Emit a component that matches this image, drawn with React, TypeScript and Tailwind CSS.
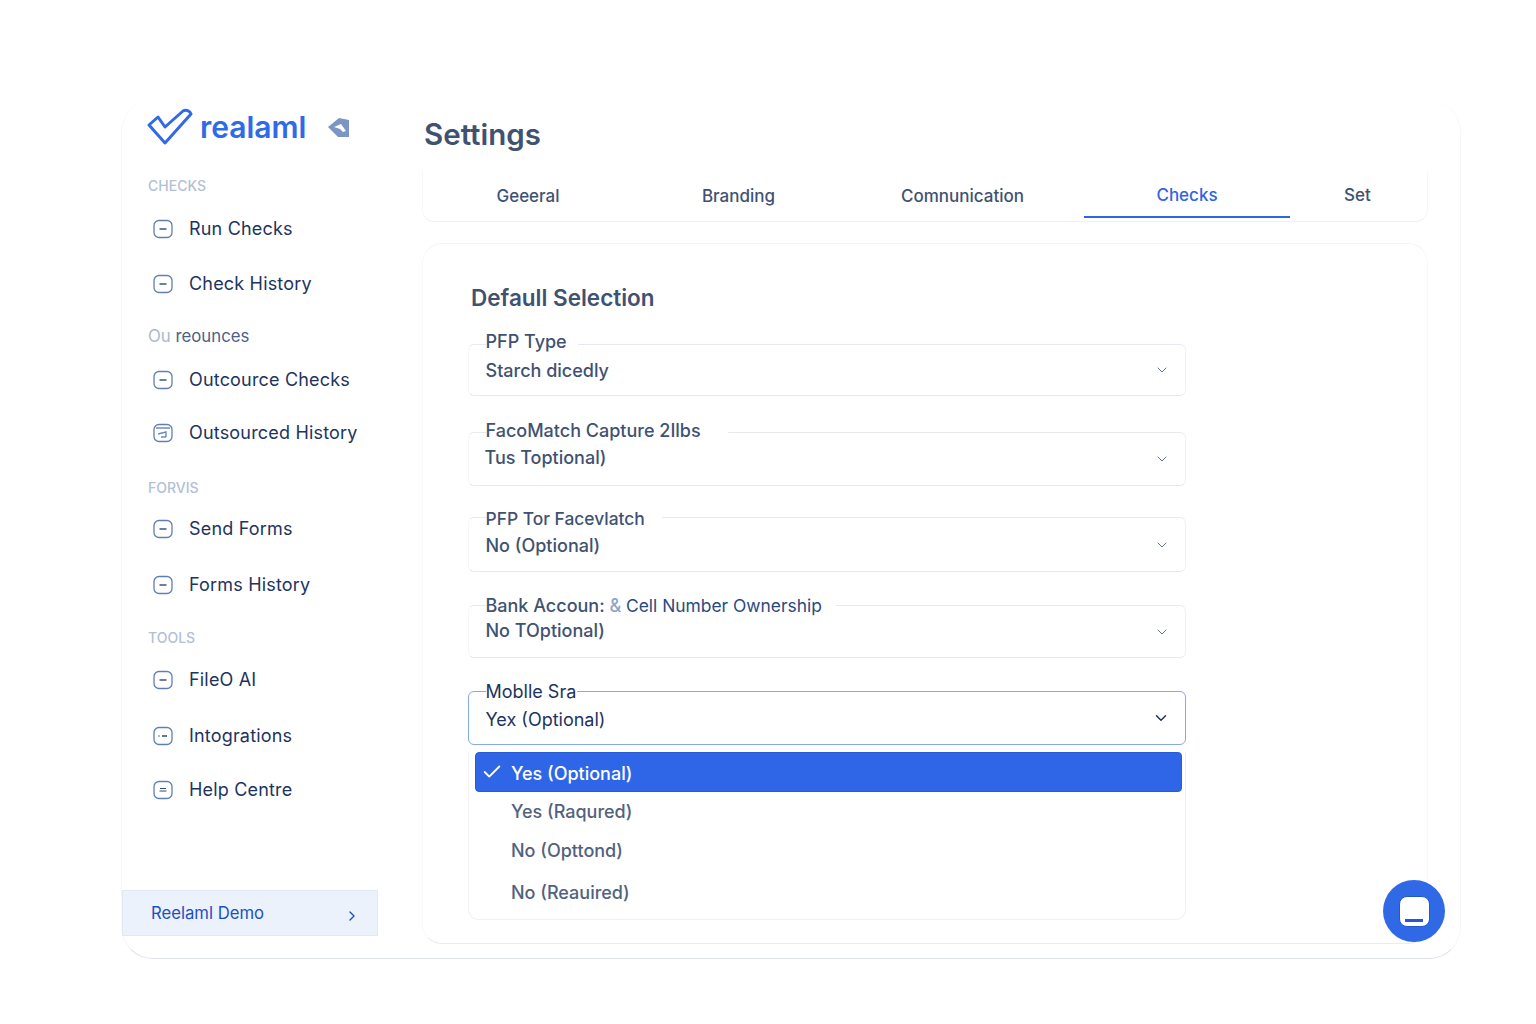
import React from 'react'
import { ChevronDown, ChevronRight, Check } from 'lucide-react'

const font = { fontFamily: 'Inter, "Noto Sans", sans-serif' }

// ── Sidebar ────────────────────────────────────────────────────────────────

const NavIcon: React.FC<{ kind?: 'minus' | 'cal' | 'dots' | 'lines' }> = ({ kind = 'minus' }) => (
  <svg width="20" height="20" viewBox="0 0 20 20" fill="none" className="shrink-0">
    <rect x="1" y="1.5" width="18" height="17" rx="5" stroke="#5f7fb3" strokeWidth="1.3" />
    {kind === 'minus' && <path d="M6.5 10h7" stroke="#2c4a7c" strokeWidth="1.4" />}
    {kind === 'cal' && <path d="M3 5h14M5 11l8-2v5M8 14h5" stroke="#6f8bb8" strokeWidth="1.4" />}
    {kind === 'dots' && <path d="M5.5 10h1M9 10h5" stroke="#2c4a7c" strokeWidth="1.6" />}
    {kind === 'lines' && <path d="M7 8.5h6M6.5 11h7" stroke="#2c4a7c" strokeWidth="1.1" />}
  </svg>
)

const NavItem: React.FC<{ label: string; kind?: 'minus' | 'cal' | 'dots' | 'lines'; className?: string }> = ({ label, kind, className }) => (
  <div className={`flex items-center gap-[16px] pl-[31px] text-[18px] tracking-[0.01em] leading-[24px] text-[#1d3461] ${className ?? ''}`}>
    <NavIcon kind={kind} />
    <span>{label}</span>
  </div>
)

const SectionLabel: React.FC<{ children: React.ReactNode; className?: string }> = ({ children, className }) => (
  <div className={`pl-[26px] text-[14px] leading-[18px] font-medium text-[#b3c0d6] ${className ?? ''}`}>{children}</div>
)

const Sidebar = () => (
  <aside className="w-[257px] shrink-0 flex flex-col">
    <div className="flex items-center pl-[25px] h-[54px]">
      <svg width="47" height="38" viewBox="0 0 47 38" fill="none">
        <path d="M2 17l9-8 7 10L36 3c3-2 7 0 8 3L18 35z" stroke="#2f6be6" strokeWidth="3" strokeLinejoin="round" />
      </svg>
      <span className="ml-[6px] text-[30px] leading-[36px] font-semibold text-[#2f6be6]">realaml</span>
      <svg width="22" height="20" viewBox="0 0 22 20" className="ml-[22px]">
        <path d="M0 10L11 1l10 2v17H10z" fill="#7c95c4" />
        <path d="M6 10l7-3 5 7-3 1-3-3z" fill="#ffffff" />
      </svg>
    </div>
    <SectionLabel className="mt-[23px]">CHECKS</SectionLabel>
    <NavItem label="Run Checks" className="mt-[22px]" />
    <NavItem label="Check History" className="mt-[31px]" />
    <div className="pl-[26px] mt-[28px] text-[16.8px] leading-[24px] text-[#4a6288]">
      <span className="text-[#a9b9d1]">Ou</span> reounces
    </div>
    <NavItem label="Outcource Checks" className="mt-[20px]" />
    <NavItem label="Outsourced History" kind="cal" className="mt-[29px]" />
    <SectionLabel className="mt-[34px]">FORVIS</SectionLabel>
    <NavItem label="Send Forms" className="mt-[20px]" />
    <NavItem label="Forms History" className="mt-[32px]" />
    <SectionLabel className="mt-[32px]">TOOLS</SectionLabel>
    <NavItem label="FileO AI" className="mt-[21px]" />
    <NavItem label="Intogrations" kind="dots" className="mt-[32px]" />
    <NavItem label="Help Centre" kind="lines" className="mt-[30px]" />
    <div className="mt-[88px] mr-[1px] h-[46px] flex items-center justify-between pl-[28px] pr-[17px] pt-[2px] bg-[#ecf2fc] border border-[#e0e8f5] text-[16.7px] text-[#1d4fc4]">
      <span>Reelaml Demo</span>
      <ChevronRight size={16} strokeWidth={2} className="mt-[3px]" />
    </div>
  </aside>
)

// ── Settings ───────────────────────────────────────────────────────────────

const tabs = [
  { label: 'Geeeral', w: 'w-[210px]', pt: 'pt-[5px]' },
  { label: 'Branding', w: 'w-[211px]', pt: 'pt-[5px]' },
  { label: 'Comnunication', w: 'w-[237px]', pt: 'pt-[5px]' },
  { label: 'Checks', w: 'w-[206px] ml-[3px]', pt: 'pt-[4px]', active: true },
  { label: 'Set', w: 'w-[135px]', pt: 'pt-[4px]' },
]

const Tabs = () => (
  <div className="flex h-[51px] w-[1006px] rounded-b-[12px] border-b border-x border-b-[#eef0f4] border-x-[#f6f7f9] text-[17px] text-[#3f5272] font-medium">
    {tabs.map(t => (
      <div
        key={t.label}
        className={`${t.w} ${t.pt} flex items-center justify-center ${t.active ? 'h-[47px] border-b-2 border-[#2f66e0] text-[#2f66e0]' : 'h-[46px]'}`}
      >
        {t.label}
      </div>
    ))}
  </div>
)

const Field: React.FC<{
  label: React.ReactNode
  value: string
  box: string
  labelPos: string
  valuePos: string
  focused?: boolean
}> = ({ label, value, box, labelPos, valuePos, focused }) => (
  <div className={`relative -ml-[3px] w-[718px] rounded-[6px] border ${focused ? 'border-[#86a9e8]' : 'border-[#e6e9ef] border-l-[#f6f7f9] border-r-[#f0f1f5] font-medium'} ${box}`}>
    <div className={`absolute left-[16.5px] right-0 flex items-center text-[18px] leading-[24px] ${labelPos} ${focused ? 'text-[#1d3461]' : 'text-[#3f5272]'}`}>
      {label}
    </div>
    <div className={`absolute left-[16.5px] text-[18px] leading-[24px] ${valuePos} ${focused ? 'text-[#1d3461]' : 'text-[#3f5272]'}`}>{value}</div>
    <ChevronDown
      size={focused ? 18 : 16}
      strokeWidth={focused ? 2 : 1.5}
      className={`absolute right-[15px] top-1/2 -translate-y-1/2 ${focused ? 'text-[#1d3461]' : 'text-[#64748b]'}`}
    />
  </div>
)

const Dropdown = () => (
  <div className="-ml-[3px] w-[718px] h-[168px] mt-[7px] rounded-b-[10px] border-x border-b border-[#f0f1f5] pl-[6px] pr-[3px] text-[18px] leading-[24px] text-[#52627e] font-medium">
    <div className="h-[40px] flex items-center gap-[8px] pl-[5px] rounded-[4px] bg-[#2f66e8] border border-[#2a5cd6] text-white">
      <Check size={22} strokeWidth={2} />
      <span className="mt-[3px]">Yes (Optional)</span>
    </div>
    <div className="pl-[36px] mt-[8px]">Yes (Raqured)</div>
    <div className="pl-[36px] mt-[15px]">No (Opttond)</div>
    <div className="pl-[36px] mt-[18px]">No (Reauired)</div>
  </div>
)

export default function App() {
  return (
    <div style={font} className="w-[1536px] h-[1024px] bg-white pt-[100px] pl-[121px] overflow-hidden">
      <div className="relative flex w-[1340px] h-[859px] rounded-[32px] border-b border-x border-b-[#dde1ea] border-x-[#f6f7f9]">
        <Sidebar />
        <main className="pl-[43px] flex-1">
          <h1 className="mt-[14px] ml-[2px] text-[29.5px] leading-[40px] font-semibold text-[#3f5272]">Settings</h1>
          <div className="mt-[17px]">
            <Tabs />
          </div>
          <section className="mt-[21px] w-[1006px] h-[701px] rounded-[20px] border border-t-[#f3f4f7] border-x-[#f8f9fa] border-b-[#e9ecf2] pl-[48px] pt-[39px]">
            <h2 className="text-[22.5px] leading-[30px] font-semibold text-[#3f5272]">Defaull Selection</h2>
            <div className="h-[31px]" />
            <Field
              label={<span className="bg-white pr-[11px]">PFP Type</span>}
              value="Starch dicedly"
              box="h-[52px]"
              labelPos="-top-[15px]"
              valuePos="bottom-[12px]"
            />
            <Field
              label={<span className="bg-white pr-[27px]">FacoMatch Capture 2Ilbs</span>}
              value="Tus Toptional)"
              box="h-[54px] mt-[36px]"
              labelPos="-top-[14px]"
              valuePos="bottom-[15px] -ml-[1px]"
            />
            <Field
              label={<span className="bg-white pr-[17px] text-[17.4px]">PFP Tor Facevlatch</span>}
              value="No (Optional)"
              box="h-[55px] mt-[31px]"
              labelPos="-top-[11px]"
              valuePos="bottom-[13px]"
            />
            <Field
              label={
                <span className="bg-white pr-[14px]">
                  Bank Accoun: <span className="text-[#8ea4c8]">&</span>{' '}
                  <span className="text-[17.4px] font-normal text-[#2b4a80]">Cell Number Ownership</span>
                </span>
              }
              value="No TOptional)"
              box="h-[53px] mt-[33px]"
              labelPos="-top-[12px]"
              valuePos="bottom-[14px]"
            />
            <Field
              label={<span className="bg-white pr-[1px]">Moblle Sra</span>}
              value="Yex (Optional)"
              box="h-[54px] mt-[33px]"
              labelPos="-top-[12px]"
              valuePos="bottom-[12px]"
              focused
            />
            <Dropdown />
          </section>
        </main>
        <button className="absolute right-[15px] bottom-[16px] w-[62px] h-[62px] rounded-full bg-[#3069e6] flex items-center justify-center">
          <span className="w-[31px] h-[31px] rounded-[8px] bg-white flex items-end justify-center pb-[4px] border border-[#2456cc]">
            <span className="w-[18px] h-[3px] bg-[#2456e0]" />
          </span>
        </button>
      </div>
    </div>
  )
}
